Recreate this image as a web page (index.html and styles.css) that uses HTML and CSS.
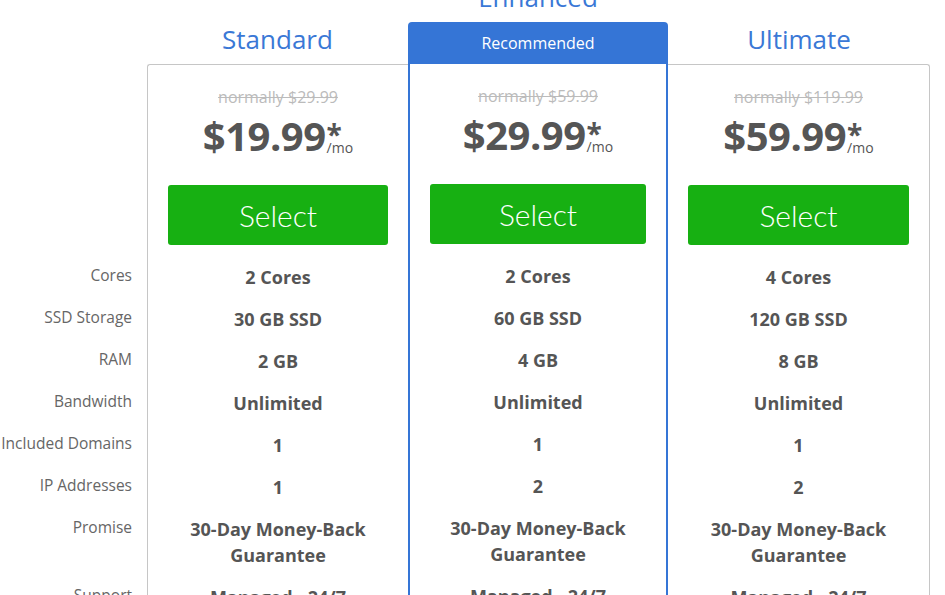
FILE: index.html
```html
<!DOCTYPE html>
<html lang="en">
<head>
<meta charset="utf-8">
<title>Plans</title>
<link rel="stylesheet" href="styles.css">
</head>
<body>
<div class="pricing">
  <div class="labels">
    <div class="label-spacer"></div>
    <div class="label">Cores</div>
    <div class="label">SSD Storage</div>
    <div class="label">RAM</div>
    <div class="label">Bandwidth</div>
    <div class="label">Included Domains</div>
    <div class="label">IP Addresses</div>
    <div class="label tall">Promise</div>
    <div class="label">Support</div>
  </div>

  <div class="plan plan-standard">
    <h2 class="plan-title">Standard</h2>
    <div class="card">
      <div class="normally">normally $29.99</div>
      <div class="price">$19.99<span class="suffix"><span class="ast">*</span><span class="mo">/mo</span></span></div>
      <div class="btn">Select</div>
      <div class="row">2 Cores</div>
      <div class="row">30 GB SSD</div>
      <div class="row">2 GB</div>
      <div class="row">Unlimited</div>
      <div class="row">1</div>
      <div class="row">1</div>
      <div class="row tall">30-Day Money-Back<br>Guarantee</div>
      <div class="row">Managed - 24/7</div>
    </div>
  </div>

  <div class="plan plan-enhanced">
    <h2 class="plan-title">Enhanced</h2>
    <div class="card-header">Recommended</div>
    <div class="card">
      <div class="normally">normally $59.99</div>
      <div class="price">$29.99<span class="suffix"><span class="ast">*</span><span class="mo">/mo</span></span></div>
      <div class="btn">Select</div>
      <div class="row">2 Cores</div>
      <div class="row">60 GB SSD</div>
      <div class="row">4 GB</div>
      <div class="row">Unlimited</div>
      <div class="row">1</div>
      <div class="row">2</div>
      <div class="row tall">30-Day Money-Back<br>Guarantee</div>
      <div class="row">Managed - 24/7</div>
    </div>
  </div>

  <div class="plan plan-ultimate">
    <h2 class="plan-title">Ultimate</h2>
    <div class="card">
      <div class="normally">normally $119.99</div>
      <div class="price">$59.99<span class="suffix"><span class="ast">*</span><span class="mo">/mo</span></span></div>
      <div class="btn">Select</div>
      <div class="row">4 Cores</div>
      <div class="row">120 GB SSD</div>
      <div class="row">8 GB</div>
      <div class="row">Unlimited</div>
      <div class="row">1</div>
      <div class="row">2</div>
      <div class="row tall">30-Day Money-Back<br>Guarantee</div>
      <div class="row">Managed - 24/7</div>
    </div>
  </div>
</div>
</body>
</html>
```

FILE: styles.css
```css
* { box-sizing: border-box; }

html, body {
  margin: 0;
  padding: 0;
  background: #fff;
  overflow: hidden;
}

body {
  font-family: "Open Sans", "Liberation Sans", sans-serif;
  color: #555;
}

.pricing {
  display: flex;
  align-items: flex-start;
  padding-top: 21px;
}

.labels {
  width: 147px;
  flex: none;
  padding-right: 15px;
  text-align: right;
}

.label-spacer { height: 235px; }

.label {
  height: 42px;
  padding-top: 6px;
  font-size: 15.5px;
  line-height: 26px;
  color: #666;
  white-space: nowrap;
}

.label.tall { height: 68px; }

.plan { flex: none; }
.plan-standard { width: 261px; }
.plan-enhanced { width: 260px; margin-top: -42px; }
.plan-ultimate { width: 262px; }

.plan-title {
  margin: 0 0 7px;
  height: 36px;
  font-size: 26px;
  line-height: 36px;
  font-weight: 400;
  color: #3a78d6;
  text-align: center;
}

.card {
  text-align: center;
  padding-top: 21px;
  height: 600px;
}

.plan-standard .card {
  border-top: 1px solid #c6c6c6;
  border-left: 1px solid #c6c6c6;
  border-top-left-radius: 3px;
}

.plan-ultimate .card {
  border-top: 1px solid #c6c6c6;
  border-right: 1px solid #c6c6c6;
  border-top-right-radius: 3px;
}

.card-header {
  height: 42px;
  background: #3575d6;
  color: #fff;
  font-size: 16px;
  line-height: 43px;
  text-align: center;
  border-radius: 4px 4px 0 0;
}

.plan-enhanced .card {
  border-left: 2px solid #3575d6;
  border-right: 2px solid #3575d6;
}

.normally {
  font-size: 16px;
  line-height: 22px;
  color: #bbb;
  text-decoration: line-through;
  margin-bottom: 4px;
}

.price {
  height: 48px;
  font-size: 40px;
  line-height: 48px;
  font-weight: 700;
  letter-spacing: -0.5px;
  color: #555;
  white-space: nowrap;
}

.suffix {
  display: inline-block;
  text-align: left;
  letter-spacing: 0;
  vertical-align: -2px;
  margin-left: 1px;
}

.ast {
  display: block;
  font-size: 28px;
  line-height: 12px;
  height: 12px;
  font-weight: 700;
}

.mo {
  display: block;
  font-size: 14px;
  line-height: 16px;
  font-weight: 400;
}

.btn {
  margin: 25px 20px 11px;
  height: 60px;
  background: #17b012;
  border-radius: 3px;
  color: #fff;
  font-family: Lato, "Open Sans", sans-serif;
  font-weight: 300;
  font-size: 30px;
  line-height: 60px;
}

.row {
  height: 42px;
  padding-top: 8px;
  font-size: 18px;
  line-height: 26px;
  font-weight: 700;
  color: #555;
}

.row.tall { height: 68px; }
```
